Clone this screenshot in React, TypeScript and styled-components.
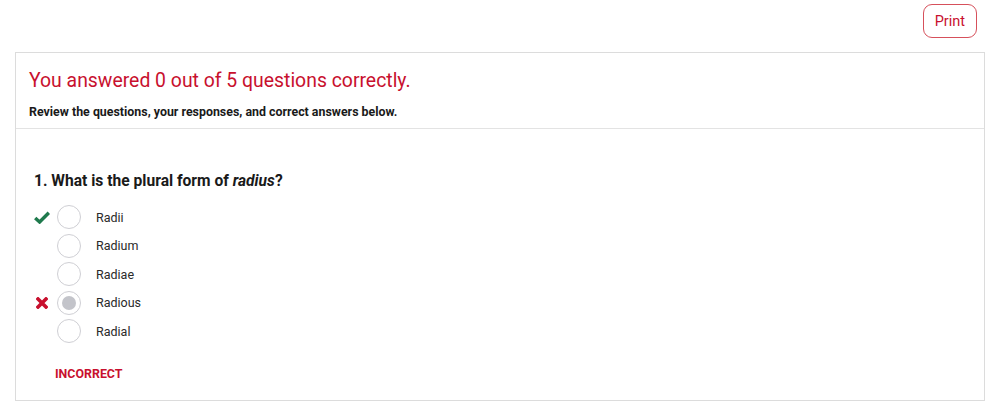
import React from "react";
import styled, { createGlobalStyle } from "styled-components";

const GlobalStyle = createGlobalStyle`
  html, body {
    margin: 0;
    padding: 0;
    background: #ffffff;
    font-family: Roboto, "Liberation Sans", Arial, sans-serif;
  }
`;

const Page = styled.div`
  width: 1001px;
  height: 404px;
  overflow: hidden;
  box-sizing: border-box;
  padding: 4px 16px 0 15px;
`;

const TopBar = styled.div`
  display: flex;
  justify-content: flex-end;
  padding-right: 8px;
`;

const PrintButton = styled.button`
  height: 34px;
  padding: 0 11px;
  border: 1px solid #d6505b;
  border-radius: 9px;
  background: #ffffff;
  color: #c8102e;
  font-family: Roboto, "Liberation Sans", Arial, sans-serif;
  font-size: 14.5px;
  cursor: pointer;
`;

const Card = styled.div`
  margin-top: 14px;
  border: 1px solid #dcdcdc;
  border-bottom: none;
`;

const CardHeader = styled.div`
  padding: 14px 13px 9px;
  border-bottom: 1px solid #e3e3e3;
`;

const Headline = styled.h1`
  margin: 0;
  font-size: 19.4px;
  font-weight: 400;
  line-height: 28px;
  color: #c8102e;
`;

const SubHeadline = styled.p`
  margin: 10px 0 0;
  font-size: 12.4px;
  font-weight: 700;
  line-height: 14px;
  color: #1a1a1a;
`;

const QuestionBlock = styled.div`
  height: 272px;
  box-sizing: border-box;
  padding: 42px 18px 0;
  border-bottom: 1px solid #dcdcdc;
`;

const QuestionTitle = styled.h2`
  margin: 0 0 14px;
  font-size: 15.6px;
  font-weight: 700;
  line-height: 20px;
  color: #1a1a1a;
`;

const OptionList = styled.div`
  display: flex;
  flex-direction: column;
  gap: 4.5px;
`;

const OptionRow = styled.div`
  display: flex;
  align-items: center;
  height: 24px;
`;

const MarkSlot = styled.span`
  width: 16px;
  margin-right: 7px;
  display: flex;
  justify-content: center;
  align-items: center;
`;

const Radio = styled.span<{ $selected?: boolean }>`
  box-sizing: border-box;
  width: 24px;
  height: 24px;
  border-radius: 50%;
  border: 1px solid #cfcfd4;
  display: flex;
  align-items: center;
  justify-content: center;
  background: #ffffff;

  &::after {
    content: "";
    width: 14px;
    height: 14px;
    border-radius: 50%;
    background: ${(p) => (p.$selected ? "#c3c4ca" : "transparent")};
  }
`;

const OptionLabel = styled.span`
  margin-left: 15px;
  font-size: 12.5px;
  color: #2a2a2a;
`;

const Verdict = styled.div`
  margin: 23px 0 0 21px;
  font-size: 12.4px;
  font-weight: 700;
  color: #c8102e;
`;

const CheckIcon = () => (
  <svg width="16" height="13" viewBox="0 0 16 13">
    <path d="M1.2 7 L5.6 11 L14.8 1.8" fill="none" stroke="#1f7a4d" strokeWidth="3.4" strokeLinejoin="miter" />
  </svg>
);

const CrossIcon = () => (
  <svg width="12" height="12" viewBox="0 0 12 12">
    <path d="M2 2 L10 10 M10 2 L2 10" stroke="#c8102e" strokeWidth="3.6" strokeLinecap="square" />
  </svg>
);

type Option = { label: string; mark?: "right" | "wrong"; selected?: boolean };

const options: Option[] = [
  { label: "Radii", mark: "right" },
  { label: "Radium" },
  { label: "Radiae" },
  { label: "Radious", mark: "wrong", selected: true },
  { label: "Radial" },
];

export default function App() {
  return (
    <>
      <GlobalStyle />
      <Page>
        <TopBar>
          <PrintButton>Print</PrintButton>
        </TopBar>
        <Card>
          <CardHeader>
            <Headline>You answered 0 out of 5 questions correctly.</Headline>
            <SubHeadline>Review the questions, your responses, and correct answers below.</SubHeadline>
          </CardHeader>
          <QuestionBlock>
            <QuestionTitle>
              1. What is the plural form of <em>radius</em>?
            </QuestionTitle>
            <OptionList>
              {options.map((o) => (
                <OptionRow key={o.label}>
                  <MarkSlot>
                    {o.mark === "right" && <CheckIcon />}
                    {o.mark === "wrong" && <CrossIcon />}
                  </MarkSlot>
                  <Radio $selected={o.selected} />
                  <OptionLabel>{o.label}</OptionLabel>
                </OptionRow>
              ))}
            </OptionList>
            <Verdict>INCORRECT</Verdict>
          </QuestionBlock>
        </Card>
      </Page>
    </>
  );
}
